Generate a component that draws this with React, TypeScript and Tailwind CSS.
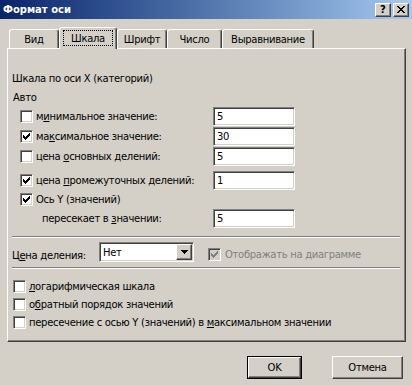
import type { ReactNode } from "react";

const sunken =
  "border border-t-[#808080] border-l-[#808080] border-r-white border-b-white shadow-[inset_1px_1px_0_#404040,inset_-1px_-1px_0_#d4d0c8]";
const raised =
  "border border-t-white border-l-white border-r-[#404040] border-b-[#404040] shadow-[inset_-1px_-1px_0_#808080]";

// classic 7x7 tick, drawn pixel by pixel
const tick: [number, number, number][] = [
  [6, 0, 1],
  [5, 1, 2],
  [0, 2, 1],
  [4, 2, 3],
  [0, 3, 2],
  [3, 3, 3],
  [0, 4, 5],
  [1, 5, 3],
  [2, 6, 1],
];

function Tick({ color }: { color: string }) {
  return (
    <svg width="7" height="7" viewBox="0 0 7 7" shapeRendering="crispEdges">
      {tick.map(([x, y, w]) => (
        <rect key={`${x}-${y}`} x={x} y={y} width={w} height={1} fill={color} />
      ))}
    </svg>
  );
}

function Box({ checked, disabled }: { checked?: boolean; disabled?: boolean }) {
  return (
    <span
      className={`inline-flex h-[13px] w-[13px] shrink-0 items-center justify-center ${sunken} ${
        disabled ? "bg-[#d4d0c8]" : "bg-white"
      }`}
    >
      {checked && <Tick color={disabled ? "#808080" : "#000"} />}
    </span>
  );
}

function Field({ value }: { value: string }) {
  return (
    <div className={`flex h-[19px] w-[82px] items-center bg-white pl-[3px] ${sunken}`}>{value}</div>
  );
}

function Sep() {
  return <div className="ml-[4px] mr-[5px] h-[2px] border-t border-b border-t-[#808080] border-b-white" />;
}

function TopRow({
  checked,
  children,
  value,
  height = "h-[20px]",
}: {
  checked: boolean;
  children: ReactNode;
  value?: string;
  height?: string;
}) {
  return (
    <div className={`flex items-center pl-[12px] ${height}`}>
      <div className="flex w-[193px] items-center gap-[3px]">
        <Box checked={checked} />
        <span>{children}</span>
      </div>
      {value && <Field value={value} />}
    </div>
  );
}

function Tab({ label, active, width }: { label: string; active?: boolean; width: string }) {
  if (active) {
    return (
      <div
        className={`relative z-10 -mb-px flex h-[22px] ${width} justify-center rounded-t-[3px] border-t border-l border-r border-t-white border-l-white border-r-[#404040] bg-[#d4d0c8] pt-[2px] shadow-[inset_-1px_0_0_#808080]`}
      >
        <span className="flex h-[16px] w-[50px] items-center justify-center border border-dotted border-black">
          {label}
        </span>
      </div>
    );
  }
  return (
    <div
      className={`flex h-[19px] ${width} justify-center rounded-t-[3px] border-t border-l border-r border-t-white border-l-white border-r-[#404040] pt-[3px] leading-[14px] shadow-[inset_-1px_0_0_#808080]`}
    >
      {label}
    </div>
  );
}

function CloseGlyph() {
  const rows: [number, number, number][] = [
    [0, 0, 2], [6, 0, 2],
    [1, 1, 2], [5, 1, 2],
    [2, 2, 4],
    [3, 3, 2],
    [2, 4, 4],
    [1, 5, 2], [5, 5, 2],
    [0, 6, 2], [6, 6, 2],
  ];
  return (
    <svg width="8" height="7" viewBox="0 0 8 7" shapeRendering="crispEdges">
      {rows.map(([x, y, w]) => (
        <rect key={`${x}-${y}`} x={x} y={y} width={w} height={1} fill="#000" />
      ))}
    </svg>
  );
}

export default function App() {
  return (
    <div className="h-[385px] w-[412px] overflow-hidden bg-[#d4d0c8] font-['DejaVu_Sans',sans-serif] text-[10px] leading-[13px] tracking-[-0.3px] text-black">
      {/* caption */}
      <div className="flex h-[19px] items-center bg-linear-to-r from-[#0a246a] to-[#a6caf0] pl-[3px] pr-[3px] tracking-normal">
        <span className="flex-1 text-[10px] font-bold text-white">Формат оси</span>
        <div className="flex gap-[2px]">
          <span className={`flex h-[14px] w-[16px] items-center justify-center bg-[#d4d0c8] text-[10px] font-bold ${raised}`}>
            ?
          </span>
          <span className={`flex h-[14px] w-[16px] items-center justify-center bg-[#d4d0c8] ${raised}`}>
            <CloseGlyph />
          </span>
        </div>
      </div>

      {/* tabs */}
      <div className="flex h-[29px] items-end pl-[9px]">
        <Tab label="Вид" width="w-[50px]" />
        <Tab label="Шкала" width="w-[58px]" active />
        <Tab label="Шрифт" width="w-[50px]" />
        <Tab label="Число" width="w-[55px]" />
        <Tab label="Выравнивание" width="w-[92px]" />
      </div>

      <div className={`ml-[7px] h-[294px] w-[399px] ${raised}`}>
        <div className="mt-[19px] flex h-[20px] items-center pl-[4px]">Шкала по оси X (категорий)</div>
        <div className="flex h-[18px] items-center pl-[5px]">Авто</div>

        <TopRow checked={false} value="5">
          м<u>и</u>нимальное значение:
        </TopRow>
        <TopRow checked value="30">
          ма<u>к</u>симальное значение:
        </TopRow>
        <TopRow checked={false} value="5">
          цена <u>о</u>сновных делений:
        </TopRow>
        <div className="h-[4px]" />
        <TopRow checked value="1">
          цена <u>п</u>ромежуточных делений:
        </TopRow>
        <TopRow checked height="h-[19px]">
          Ось Y (значений)
        </TopRow>
        <div className="flex h-[19px] items-center pl-[12px]">
          <div className="w-[193px] pl-[22px]">
            пересекает в <u>з</u>начении:
          </div>
          <Field value="5" />
        </div>

        <div className="mt-[8px]">
          <Sep />
        </div>

        <div className="mt-[4px] flex h-[20px] items-end pl-[4px]">
          <span className="w-[87px]">
            Ц<u>е</u>на деления:
          </span>
          <div className={`flex h-[20px] w-[95px] items-center justify-between bg-white pl-[3px] pr-[1px] ${sunken}`}>
            <span>Нет</span>
            <span
              className={`flex h-[16px] w-[16px] items-center justify-center bg-[#d4d0c8] ${raised}`}
            >
              <svg width="7" height="4" viewBox="0 0 7 4" shapeRendering="crispEdges">
                <path d="M0 0h7v1h-1v1h-1v1h-1v1h-1v-1h-1v-1h-1v-1h-1z" fill="#000" />
              </svg>
            </span>
          </div>
          <div className="mb-[1px] ml-[14px] flex items-center gap-[4px] text-[#808080]">
            <Box checked disabled />
            <span>Отображать на диаграмме</span>
          </div>
        </div>

        <div className="mt-[5px]">
          <Sep />
        </div>

        <div className="mt-[8px] pl-[5px]">
          <div className="flex h-[18px] items-center gap-[3px]">
            <Box />
            <span>
              <u>л</u>огарифмическая шкала
            </span>
          </div>
          <div className="flex h-[18px] items-center gap-[3px]">
            <Box />
            <span>
              о<u>б</u>ратный порядок значений
            </span>
          </div>
          <div className="flex h-[18px] items-center gap-[3px]">
            <Box />
            <span>
              пересечение с осью Y (значений) в <u>м</u>аксимальном значении
            </span>
          </div>
        </div>
      </div>

      {/* dialog buttons */}
      <div className="mt-[14px] flex justify-end gap-[30px] pr-[9px]">
        <div className="h-[23px] w-[55px] border border-black">
          <div className={`flex h-full w-full items-center justify-center ${raised}`}>OK</div>
        </div>
        <div className={`flex h-[23px] w-[71px] items-center justify-center ${raised}`}>Отмена</div>
      </div>
    </div>
  );
}
